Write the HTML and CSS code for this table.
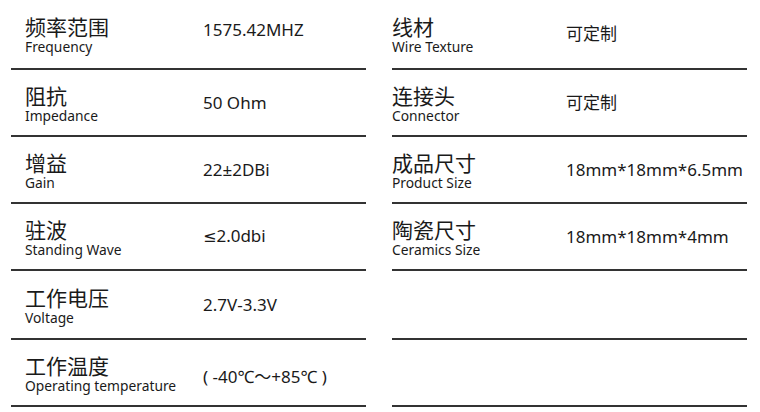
FILE: index.html
```html
<!DOCTYPE html>
<html lang="zh">
<head>
<meta charset="utf-8">
<link rel="stylesheet" href="styles.css">
</head>
<body>
<div class="specs">
  <div class="row row-left">
    <div class="label"><div class="zh">频率范围</div><div class="en">Frequency</div></div>
    <div class="value value-high">1575.42MHZ</div>
  </div>
  <div class="row row-right">
    <div class="label"><div class="zh">线材</div><div class="en">Wire Texture</div></div>
    <div class="value">可定制</div>
  </div>
  <div class="row row-left">
    <div class="label"><div class="zh">阻抗</div><div class="en">Impedance</div></div>
    <div class="value">50 Ohm</div>
  </div>
  <div class="row row-right">
    <div class="label"><div class="zh">连接头</div><div class="en">Connector</div></div>
    <div class="value">可定制</div>
  </div>
  <div class="row row-left">
    <div class="label"><div class="zh">增益</div><div class="en">Gain</div></div>
    <div class="value">22±2DBi</div>
  </div>
  <div class="row row-right">
    <div class="label"><div class="zh">成品尺寸</div><div class="en">Product Size</div></div>
    <div class="value">18mm*18mm*6.5mm</div>
  </div>
  <div class="row row-left">
    <div class="label"><div class="zh">驻波</div><div class="en">Standing Wave</div></div>
    <div class="value"><span class="sym">≤</span>2.0dbi</div>
  </div>
  <div class="row row-right">
    <div class="label"><div class="zh">陶瓷尺寸</div><div class="en">Ceramics Size</div></div>
    <div class="value">18mm*18mm*4mm</div>
  </div>
  <div class="row row-left">
    <div class="label"><div class="zh">工作电压</div><div class="en">Voltage</div></div>
    <div class="value">2.7V-3.3V</div>
  </div>
  <div class="row row-right"></div>
  <div class="row row-left">
    <div class="label"><div class="zh">工作温度</div><div class="en">Operating temperature</div></div>
    <div class="value value-temp">( -40℃<span class="tilde">～</span>+85℃ )</div>
  </div>
  <div class="row row-right"></div>
</div>
</body>
</html>
```

FILE: styles.css
```css
html, body {
  margin: 0;
  padding: 0;
  background: #ffffff;
}

body {
  font-family: "Noto Sans", "Noto Sans CJK SC", sans-serif;
  color: #1a1a1a;
}

.specs {
  display: grid;
  grid-template-columns: 355px 355px;
  grid-template-rows: 70px 67px 67px 67px 69px 67px;
  column-gap: 26px;
  padding-left: 11px;
}

.row {
  display: grid;
  align-items: center;
  border-bottom: 2px solid #333333;
}

.row-left {
  grid-template-columns: 178px 1fr;
  padding-left: 14px;
}

.row-right {
  grid-template-columns: 174px 1fr;
}

.label {
  display: flex;
  flex-direction: column;
  padding-top: 2px;
}

.zh {
  font-family: "Noto Sans CJK SC", sans-serif;
  font-size: 21px;
  line-height: 24px;
}

.en {
  font-size: 13.8px;
  line-height: 18px;
}

.value {
  font-size: 17px;
  line-height: 22px;
}

.value-high {
  margin-bottom: 8px;
}

.sym {
  font-family: "DejaVu Sans", sans-serif;
  font-size: 16px;
}

.value-temp {
  padding-top: 7px;
}

.tilde {
  font-family: "Noto Sans CJK SC", sans-serif;
  font-size: 17px;
}
```
